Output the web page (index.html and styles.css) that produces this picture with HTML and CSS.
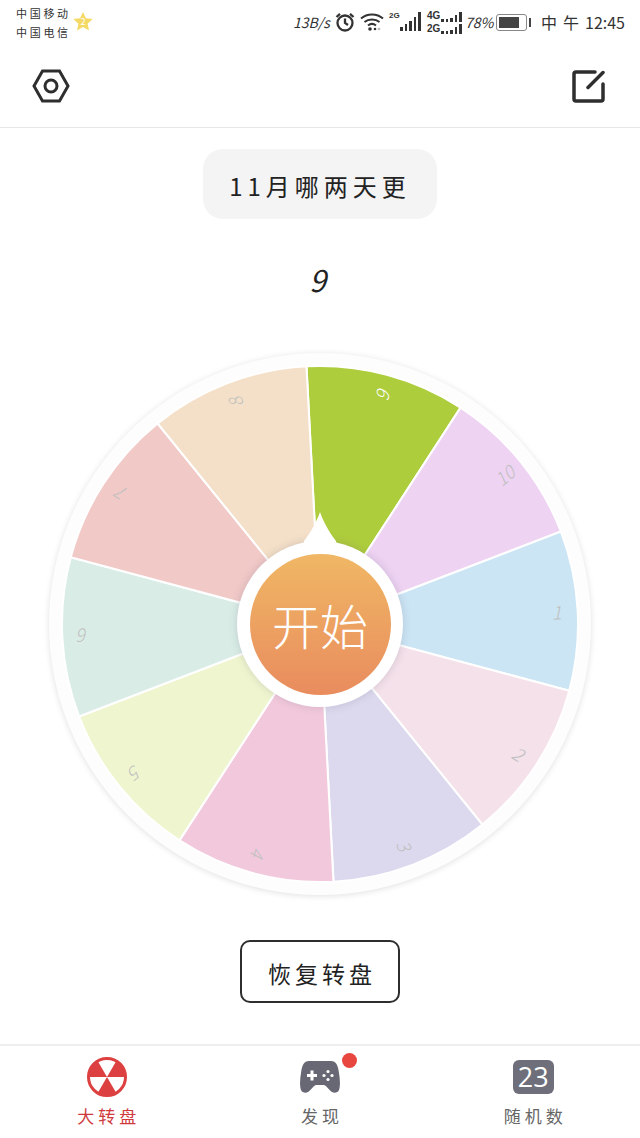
FILE: index.html
```html
<!DOCTYPE html>
<html lang="zh-CN">
<head>
    <meta charset="UTF-8">
    <meta name="viewport" content="width=device-width, initial-scale=1.0">
    <title>大转盘</title>
    <link rel="stylesheet" href="styles.css">
</head>
<body>
<div class="page">
    <!-- Status bar -->
    <div class="status-bar">
        <div class="carriers">
            <div class="carrier-names">
                <span>中国移动</span>
                <span>中国电信</span>
            </div>
            <svg class="star" viewBox="0 0 24 24">
                <path d="M12 1l3.2 7 7.3.8-5.5 5 1.6 7.4L12 17.4l-6.6 3.8L7 13.8l-5.5-5L8.800 8z"/>
                <text x="12" y="15.500" class="star-num">2</text>
            </svg>
        </div>
        <div class="status-right">
            <span class="speed">13B/s</span>
            <svg class="ic-alarm" viewBox="0 0 20 20">
                <circle cx="10" cy="11" r="7.500"/>
                <path d="M10 6.500V11l3 2M1.500 5L5 1.800M18.500 5L15 1.800"/>
            </svg>
            <svg class="ic-wifi" viewBox="0 0 24 20">
                <path d="M1 6.500c6-5.500 16-5.500 22 0M4.500 10c4-3.500 11-3.500 15 0M8 13.500c2.500-2 5.500-2 8 0"/>
                <circle cx="10" cy="17" r="1.800" class="fill-dark"/>
                <circle cx="15" cy="17" r="1.300" class="fill-dark"/>
                <circle cx="19" cy="17" r="1.300" class="fill-grey"/>
            </svg>
            <div class="sim sim-one">
                <span class="net">2G</span>
                <div class="bars">
                    <i class="b1"></i><i class="b2"></i><i class="b3"></i><i class="b4"></i><i class="b5"></i>
                </div>
            </div>
            <div class="sim-two">
                <div class="sim-row">
                    <span class="net">4G</span>
                    <div class="bars small">
                        <i class="b1"></i><i class="b1"></i><i class="b2"></i><i class="b3"></i><i class="b4"></i>
                    </div>
                </div>
                <div class="sim-row">
                    <span class="net">2G</span>
                    <div class="bars small">
                        <i class="b1"></i><i class="b1"></i><i class="b2"></i><i class="b3"></i><i class="b4"></i>
                    </div>
                </div>
            </div>
            <span class="percent">78%</span>
            <div class="battery"><div class="battery-level"></div></div>
            <span class="clock"><span class="clock-noon">中午</span>12:45</span>
        </div>
    </div>

    <!-- Top bar -->
    <div class="top-bar">
        <svg class="ic-settings" viewBox="0 0 38 34">
            <path d="M10.500 2h17L36 17l-8.500 15h-17L2 17z"/>
            <circle cx="19" cy="17" r="6"/>
        </svg>
        <svg class="ic-edit" viewBox="0 0 34 34">
            <path d="M24 3H5a2 2 0 0 0-2 2v25a2 2 0 0 0 2 2h25a2 2 0 0 0 2-2V15"/>
            <path d="M17 18.500L32 3.500"/>
        </svg>
    </div>

    <!-- Main -->
    <div class="main">
        <div class="title">11月哪两天更</div>
        <div class="result">9</div>
        <div class="wheel">
            <svg class="wheel-face" viewBox="-258 -258 516 516">
                <defs>
                    <path id="slice" d="M0 0L-79.700-245.400A258 258 0 0 1 79.700-245.400Z"/>
                </defs>
                <use href="#slice" class="slice s9" transform="rotate(15)"/>
                <use href="#slice" class="slice s10" transform="rotate(51)"/>
                <use href="#slice" class="slice s1" transform="rotate(87)"/>
                <use href="#slice" class="slice s2" transform="rotate(123)"/>
                <use href="#slice" class="slice s3" transform="rotate(159)"/>
                <use href="#slice" class="slice s4" transform="rotate(195)"/>
                <use href="#slice" class="slice s5" transform="rotate(231)"/>
                <use href="#slice" class="slice s6" transform="rotate(267)"/>
                <use href="#slice" class="slice s7" transform="rotate(303)"/>
                <use href="#slice" class="slice s8" transform="rotate(339)"/>
                <text class="num num-on" transform="rotate(15) translate(0 -237) rotate(-90)">9</text>
                <text class="num" transform="rotate(51) translate(0 -237) rotate(-90)">10</text>
                <text class="num" transform="rotate(87) translate(0 -237) rotate(-90)">1</text>
                <text class="num" transform="rotate(123) translate(0 -237) rotate(-90)">2</text>
                <text class="num" transform="rotate(159) translate(0 -237) rotate(-90)">3</text>
                <text class="num" transform="rotate(195) translate(0 -237) rotate(-90)">4</text>
                <text class="num" transform="rotate(231) translate(0 -237) rotate(-90)">5</text>
                <text class="num" transform="rotate(267) translate(0 -237) rotate(-90)">6</text>
                <text class="num" transform="rotate(303) translate(0 -237) rotate(-90)">7</text>
                <text class="num" transform="rotate(339) translate(0 -237) rotate(-90)">8</text>
            </svg>
            <div class="hub">
                <svg class="pointer" viewBox="0 0 44 38">
                    <path d="M22 0C25 9 31 20 38 29L40 38H4L6 29C13 20 19 9 22 0Z"/>
                </svg>
                <div class="start">开始</div>
            </div>
        </div>
        <div class="restore">恢复转盘</div>
    </div>

    <!-- Tabs -->
    <div class="tab-bar">
        <div class="tab active">
            <svg class="tab-icon" viewBox="-20 -20 40 40">
                <circle class="ring" r="18.500"/>
                <path class="wedge" d="M0 0L9-15.600A18 18 0 0 1 18 0Z"/>
                <path class="wedge" d="M0 0L9-15.600A18 18 0 0 1 18 0Z" transform="rotate(120)"/>
                <path class="wedge" d="M0 0L9-15.600A18 18 0 0 1 18 0Z" transform="rotate(240)"/>
            </svg>
            <span>大转盘</span>
        </div>
        <div class="tab">
            <div class="tab-icon">
                <svg class="pad" viewBox="0 0 40 32">
                    <path class="pad-body" d="M9 0h22c5 0 7 4 8 12 1 6 1.500 13 0 17-1 2.500-4.500 3.500-7 2-3-2-5-6-8-7h-8c-3 1-5 5-8 7-2.500 1.500-6 .5-7-2-1.500-4-1-11 0-17C2 4 4 0 9 0z"/>
                    <path class="pad-plus" d="M7 14.500h10M12 9.500v10"/>
                    <circle class="pad-dot" cx="28" cy="10.500" r="1.600"/>
                    <circle class="pad-dot" cx="28" cy="18.500" r="1.600"/>
                    <circle class="pad-dot" cx="24" cy="14.500" r="1.600"/>
                    <circle class="pad-dot" cx="32" cy="14.500" r="1.600"/>
                </svg>
                <i class="badge"></i>
            </div>
            <span>发现</span>
        </div>
        <div class="tab">
            <div class="tab-icon number-icon">23</div>
            <span>随机数</span>
        </div>
    </div>
</div>
</body>
</html>
```

FILE: styles.css
```css
body {
    margin: 0;
    padding: 0;
    background: #fff;
    color: #222;
    font-family: "Noto Sans CJK SC", "Noto Sans", sans-serif;
}
.page {
    display: flex;
    flex-direction: column;
    width: 640px;
    height: 1138px;
    overflow: hidden;
}

/* status bar */
.status-bar {
    display: flex;
    justify-content: space-between;
    align-items: center;
    height: 44px;
    padding: 0 15px 0 16px;
    color: #333;
}
.carriers {
    display: flex;
    align-items: center;
    gap: 1px;
}
.carrier-names {
    display: flex;
    flex-direction: column;
    gap: 3px;
    font-size: 11px;
    line-height: 16px;
    letter-spacing: 2.700px;
}
.star {
    width: 22px;
    height: 22px;
    fill: #f4d964;
}
.star-num {
    fill: #fff;
    font-size: 10px;
    text-anchor: middle;
}
.status-right {
    display: flex;
    align-items: center;
}
.speed {
    width: 36px;
    margin-right: 6px;
    font-size: 14px;
    font-style: italic;
    white-space: nowrap;
}
.ic-alarm {
    width: 20px;
    height: 20px;
    margin-right: 5px;
    fill: none;
    stroke: #333;
    stroke-width: 2.300;
}
.ic-wifi {
    width: 24px;
    height: 20px;
    margin-right: 5px;
    fill: none;
    stroke: #333;
    stroke-width: 2;
}
.fill-dark {
    fill: #333;
    stroke: none;
}
.fill-grey {
    fill: #bbb;
    stroke: none;
}
.sim {
    display: flex;
    align-items: flex-start;
    width: 32px;
    height: 22px;
    margin-right: 6px;
}
.net {
    width: 11px;
    flex-shrink: 0;
    font-family: "Liberation Sans", sans-serif;
    font-size: 8px;
    font-weight: 700;
    line-height: 10px;
}
.bars {
    display: flex;
    align-items: flex-end;
    gap: 2px;
    height: 20px;
}
.bars i {
    display: block;
    width: 2.500px;
    background: #333;
}
.bars .b1 { height: 4px; }
.bars .b2 { height: 7px; }
.bars .b3 { height: 10px; }
.bars .b4 { height: 14px; }
.bars .b5 { height: 19px; }
.bars.small {
    height: 10px;
}
.bars.small .b1 { height: 3px; }
.bars.small .b2 { height: 4px; }
.bars.small .b3 { height: 7px; }
.bars.small .b4 { height: 10px; }
.sim-two {
    display: flex;
    flex-direction: column;
    gap: 1px;
    width: 34px;
    margin-right: 4px;
}
.sim-two .net {
    width: 14px;
    font-size: 10px;
    line-height: 11.500px;
}
.sim-row {
    display: flex;
    align-items: flex-end;
}
.percent {
    width: 24px;
    margin-right: 7px;
    font-size: 14px;
    font-style: italic;
}
.battery {
    position: relative;
    box-sizing: border-box;
    width: 31px;
    height: 17px;
    margin-right: 14px;
    padding: 2px;
    border: 1px solid #888;
    border-radius: 3px;
}
.battery::after {
    content: "";
    position: absolute;
    top: 3px;
    right: -5px;
    width: 2px;
    height: 9px;
    background: #444;
}
.battery-level {
    width: 78%;
    height: 100%;
    background: #444;
}
.clock {
    width: 84px;
    font-size: 16px;
    white-space: nowrap;
}
.clock-noon {
    letter-spacing: 6px;
}

/* top bar */
.top-bar {
    display: flex;
    justify-content: space-between;
    align-items: center;
    height: 84px;
    padding: 0 35px 0 32px;
    box-sizing: border-box;
    border-bottom: 1px solid #e6e6e6;
}
.ic-settings {
    width: 38px;
    height: 34px;
    fill: none;
    stroke: #2e2e2e;
    stroke-width: 3;
}
.ic-edit {
    width: 34px;
    height: 34px;
    fill: none;
    stroke: #2e2e2e;
    stroke-width: 3.500;
    stroke-linecap: round;
}

/* main */
.main {
    display: flex;
    flex-direction: column;
    align-items: center;
}
.title {
    width: 234px;
    height: 70px;
    margin-top: 21px;
    border-radius: 20px;
    background: #f4f4f4;
    font-size: 24px;
    line-height: 74px;
    letter-spacing: 5px;
    text-align: center;
}
.result {
    margin-top: 38px;
    padding-right: 5px;
    font-size: 30px;
    font-style: italic;
    line-height: 44px;
}
.wheel {
    position: relative;
    display: flex;
    justify-content: center;
    align-items: center;
    width: 542px;
    height: 542px;
    margin-top: 52px;
    border-radius: 50%;
    background: #fcfdfc;
    box-shadow: 0 1px 6px rgba(0, 0, 0, 0.12);
}
.wheel-face {
    width: 516px;
    height: 516px;
    overflow: visible;
}
.slice {
    stroke: #fff;
    stroke-width: 2;
}
.s1 { fill: #cbe5f5; }
.s2 { fill: #f4e1ea; }
.s3 { fill: #dcd9ee; }
.s4 { fill: #f2c9dc; }
.s5 { fill: #eff6cf; }
.s6 { fill: #d9ede6; }
.s7 { fill: #f1c9c7; }
.s8 { fill: #f4e0c8; }
.s9 { fill: #aecd3d; }
.s10 { fill: #eed3f3; }
.num {
    fill: #c0c0c0;
    font-size: 18px;
    font-weight: 300;
    font-style: italic;
    text-anchor: middle;
    dominant-baseline: central;
}
.num-on {
    fill: #fff;
}
.hub {
    position: absolute;
    top: 188px;
    left: 188px;
    display: flex;
    justify-content: center;
    align-items: center;
    width: 166px;
    height: 166px;
    border-radius: 50%;
    background: #fff;
    box-shadow: 0 0 8px rgba(90, 80, 110, 0.22);
}
.pointer {
    position: absolute;
    top: -29px;
    left: 61px;
    width: 44px;
    height: 38px;
    fill: #fff;
}
.start {
    position: relative;
    width: 141px;
    height: 141px;
    border-radius: 50%;
    background: linear-gradient(#f0b765, #e98c5e);
    color: #fff;
    font-size: 48px;
    font-weight: 300;
    line-height: 141px;
    text-align: center;
}
.restore {
    box-sizing: border-box;
    width: 160px;
    height: 63px;
    margin-top: 45px;
    padding-left: 4px;
    border: 2px solid #2e2e2e;
    border-radius: 10px;
    font-size: 23px;
    line-height: 62px;
    letter-spacing: 4px;
    text-align: center;
}

/* tabs */
.tab-bar {
    display: flex;
    box-sizing: border-box;
    height: 94px;
    margin-top: auto;
    border-top: 2px solid #eee;
}
.tab {
    display: flex;
    flex-direction: column;
    align-items: center;
    flex: 1;
    padding-top: 11px;
    color: #666;
    font-size: 17px;
    letter-spacing: 4px;
}
.tab span {
    margin-top: 7px;
    padding-left: 4px;
    line-height: 24px;
}
.tab.active {
    color: #d0393c;
}
.tab-icon {
    position: relative;
    display: block;
    width: 40px;
    height: 40px;
}
.ring {
    fill: #fff;
    stroke: #dc4040;
    stroke-width: 3;
}
.wedge {
    fill: #dc4040;
}
.pad {
    display: block;
    width: 40px;
    height: 32px;
    margin-top: 4px;
}
.pad-body {
    fill: #686874;
}
.pad-plus {
    fill: none;
    stroke: #fff;
    stroke-width: 3;
}
.pad-dot {
    fill: #fff;
}
.badge {
    position: absolute;
    top: -4px;
    right: -17px;
    width: 15px;
    height: 15px;
    border-radius: 50%;
    background: #e8473f;
}
.number-icon {
    box-sizing: border-box;
    width: 41px;
    height: 34px;
    margin-top: 3px;
    margin-bottom: 3px;
    border-radius: 6px;
    background: #6e6f7b;
    color: #fff;
    font-family: "Open Sans", sans-serif;
    font-size: 27px;
    line-height: 34px;
    letter-spacing: 0;
    text-align: center;
}
```
